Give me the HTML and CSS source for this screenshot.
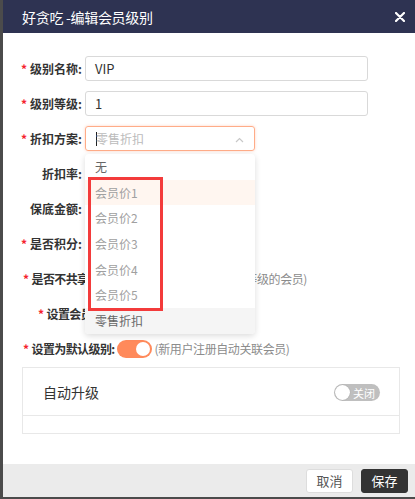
FILE: index.html
```html
<!DOCTYPE html>
<html lang="zh-CN">
<head>
<meta charset="utf-8">
<title>编辑会员级别</title>
<link rel="stylesheet" href="styles.css">
</head>
<body>
<div class="modal">
  <div class="header">
    <span class="title">好贪吃 -编辑会员级别</span>
    <svg class="close" width="10" height="10" viewBox="0 0 10 10"><path d="M1 1L9 9M9 1L1 9" stroke="#fff" stroke-width="2.2" stroke-linecap="round"/></svg>
  </div>
  <div class="body">
    <div class="form">
      <div class="row">
        <div class="label"><span class="star">*</span>级别名称:</div>
        <div class="input">VIP</div>
      </div>
      <div class="row">
        <div class="label"><span class="star">*</span>级别等级:</div>
        <div class="input">1</div>
      </div>
      <div class="row">
        <div class="label"><span class="star">*</span>折扣方案:</div>
        <div class="select-wrap">
          <div class="select"><span class="cursor"></span><span class="placeholder">零售折扣</span>
            <svg class="caret" width="9" height="6" viewBox="0 0 9 6"><path d="M1 5L4.5 1.5L8 5" fill="none" stroke="#c8c8c8" stroke-width="1.2"/></svg>
          </div>
          <ul class="dropdown">
            <li class="dark">无</li>
            <li class="hover">会员价1</li>
            <li>会员价2</li>
            <li>会员价3</li>
            <li>会员价4</li>
            <li>会员价5</li>
            <li class="dark selected">零售折扣</li>
          </ul>
          <div class="mark"></div>
        </div>
      </div>
      <div class="row">
        <div class="label">折扣率:</div>
      </div>
      <div class="row">
        <div class="label">保底金额:</div>
      </div>
      <div class="row">
        <div class="label"><span class="star">*</span>是否积分:</div>
      </div>
      <div class="row free">
        <div class="label-free"><span class="star">*</span>是否不共享会员价:</div>
        <span class="hint share">(不共享其他等级的会员)</span>
      </div>
      <div class="row free indent">
        <div class="label-free"><span class="star">*</span>设置会员等级:</div>
      </div>
      <div class="row free">
        <div class="label-free"><span class="star">*</span>设置为默认级别:</div>
        <span class="toggle on"><span class="knob"></span></span>
        <span class="hint">(新用户注册自动关联会员)</span>
      </div>
    </div>
    <div class="panel">
      <div class="panel-row">
        <span class="panel-title">自动升级</span>
        <span class="toggle off"><span class="knob"></span><span class="toggle-text">关闭</span></span>
      </div>
      <div class="panel-foot"></div>
    </div>
  </div>
  <div class="footer">
    <button class="btn">取消</button>
    <button class="btn primary">保存</button>
  </div>
</div>
</body>
</html>
```
FILE: styles.css
```css
* { box-sizing: border-box; }
html, body {
  margin: 0;
  padding: 0;
  width: 415px;
  height: 499px;
  overflow: hidden;
  background: #4b4b4b;
  font-family: "Noto Sans CJK SC", "Noto Sans", sans-serif;
}
.modal {
  margin-left: 3px;
  height: 497px;
  background: #fff;
  display: flex;
  flex-direction: column;
}
.header {
  height: 33px;
  flex: none;
  background: #2e3352;
  display: flex;
  align-items: center;
  justify-content: space-between;
  padding: 0 10px 0 19px;
}
.title {
  color: #fff;
  font-size: 14px;
  letter-spacing: -0.3px;
}
.close { display: block; }
.body {
  flex: 1;
  padding-top: 23px;
}
.form {
  display: flex;
  flex-direction: column;
  gap: 10px;
}
.row {
  height: 25px;
  display: flex;
  align-items: center;
}
.label {
  width: 79px;
  margin-right: 3px;
  flex: none;
  text-align: right;
  font-size: 12px;
  font-weight: 700;
  color: #333;
  white-space: nowrap;
}
.star {
  color: #f5222d;
  font-weight: 700;
  margin-right: 3px;
  font-size: 12px;
}
.row.free { padding-left: 20px; }
.row.indent { padding-left: 35px; }
.label-free {
  font-size: 12px;
  font-weight: 700;
  color: #333;
  white-space: nowrap;
  letter-spacing: -0.6px;
}
.input {
  width: 283px;
  height: 25px;
  border: 1px solid #d9d9d9;
  border-radius: 3px;
  padding-left: 9px;
  font-size: 13px;
  line-height: 23px;
  color: #333;
}
.select-wrap {
  position: relative;
  width: 170px;
  height: 25px;
}
.select {
  height: 25px;
  border: 1px solid #ffac88;
  border-radius: 3px;
  box-shadow: 0 0 3px rgba(255, 130, 80, 0.35);
  display: flex;
  align-items: center;
  padding-left: 10px;
  position: relative;
}
.cursor {
  width: 1px;
  height: 14px;
  background: #222;
  margin-right: -1px;
}
.placeholder {
  font-size: 12px;
  color: #bbb;
}
.caret {
  position: absolute;
  right: 10px;
  top: 10px;
}
.dropdown {
  position: absolute;
  left: 0;
  top: 28px;
  width: 170px;
  margin: 0;
  padding: 0;
  list-style: none;
  background: #fff;
  border-radius: 4px;
  box-shadow: 0 2px 6px rgba(0, 0, 0, 0.14);
  overflow: hidden;
  z-index: 2;
}
.dropdown li {
  height: 25.7px;
  line-height: 25.7px;
  padding-left: 10px;
  font-size: 12px;
  color: #a0a0a0;
}
.dropdown li.dark { color: #666; }
.dropdown li.hover { background: #fff6f0; }
.dropdown li.selected { background: #f5f5f5; }
.mark {
  position: absolute;
  left: 3px;
  top: 51px;
  width: 75px;
  height: 134px;
  border: 3px solid #f33b3b;
  z-index: 3;
}
.hint {
  font-size: 12px;
  color: #8c8c8c;
  white-space: nowrap;
  letter-spacing: -0.4px;
}
.hint.share {
  margin-left: auto;
  margin-right: 108px;
}
.toggle {
  position: relative;
  display: inline-block;
  border-radius: 9px;
  flex: none;
}
.toggle.on {
  width: 35px;
  height: 18px;
  background: #ff8a5b;
  margin: 0 3px 0 2px;
}
.toggle.on .knob {
  position: absolute;
  right: 2px;
  top: 2px;
  width: 14px;
  height: 14px;
  border-radius: 50%;
  background: #fff;
}
.panel {
  margin: 6px 15px 0 19px;
  border: 1px solid #e8e8e8;
}
.panel-row {
  height: 48px;
  display: flex;
  align-items: center;
  justify-content: space-between;
  padding: 0 19px 0 20px;
  border-bottom: 1px solid #e8e8e8;
}
.panel-title {
  font-size: 14px;
  color: #333;
}
.toggle.off {
  width: 46px;
  height: 17px;
  background: #bfbfbf;
  display: flex;
  align-items: center;
  margin-top: 2px;
}
.toggle.off .knob {
  width: 15px;
  height: 15px;
  border-radius: 50%;
  background: #fff;
  margin-left: 1px;
  box-shadow: 0 0 1px rgba(0,0,0,0.3);
}
.toggle-text {
  color: #fff;
  font-size: 11px;
  margin-left: 3px;
}
.panel-foot { height: 17px; }
.footer {
  height: 33px;
  flex: none;
  background: #ebebeb;
  display: flex;
  align-items: center;
  justify-content: flex-end;
  gap: 8px;
  padding-right: 7px;
}
.btn {
  width: 47px;
  height: 24px;
  border: 1px solid #ddd;
  border-radius: 3px;
  background: #fff;
  font-family: inherit;
  font-size: 13px;
  color: #555;
  padding: 0;
}
.btn.primary {
  background: #333;
  border-color: #333;
  color: #fff;
}
```
